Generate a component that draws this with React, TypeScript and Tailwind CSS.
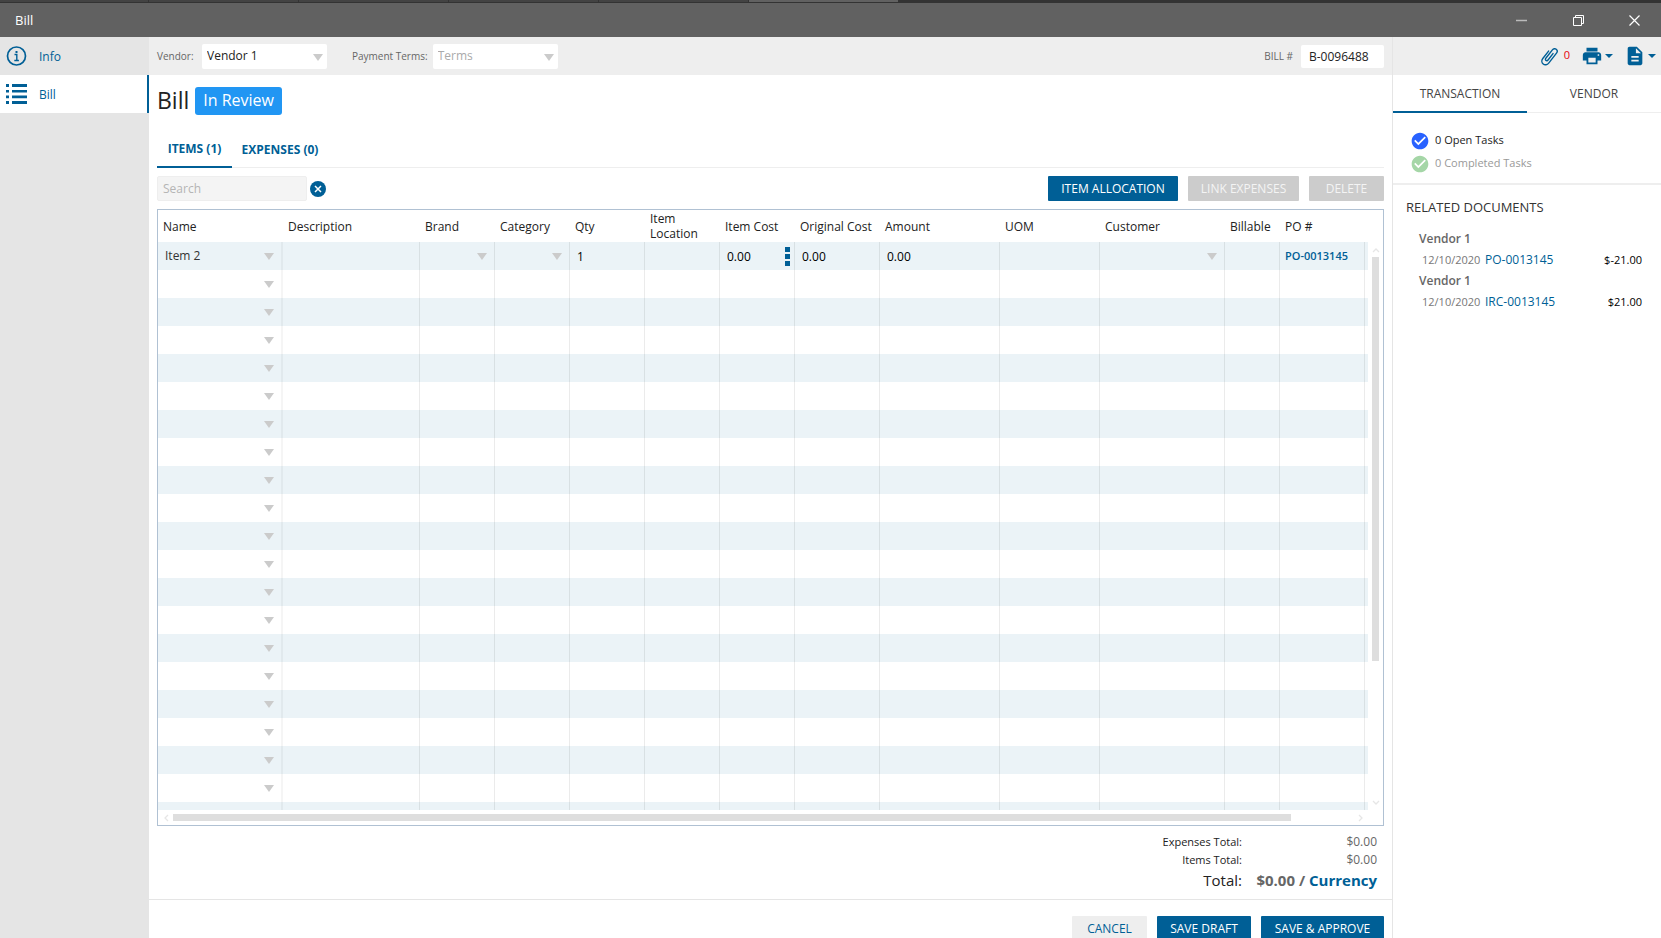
import type { ReactNode } from 'react';
import { MdCheckCircle, MdDescription, MdPrint } from 'react-icons/md';
import clsx from 'clsx';

type Column = {
  key: string;
  label: string;
  width: string;
  kind?: 'select' | 'input' | 'link';
};

const COLUMNS: Column[] = [
  { key: 'name', label: 'Name', width: 'w-[125px]', kind: 'select' },
  { key: 'description', label: 'Description', width: 'w-[137px]' },
  { key: 'brand', label: 'Brand', width: 'w-[75px]', kind: 'select' },
  { key: 'category', label: 'Category', width: 'w-[75px]', kind: 'select' },
  { key: 'qty', label: 'Qty', width: 'w-[75px]', kind: 'input' },
  { key: 'location', label: 'Item Location', width: 'w-[75px]' },
  { key: 'itemCost', label: 'Item Cost', width: 'w-[75px]', kind: 'input' },
  { key: 'originalCost', label: 'Original Cost', width: 'w-[85px]', kind: 'input' },
  { key: 'amount', label: 'Amount', width: 'w-[120px]', kind: 'input' },
  { key: 'uom', label: 'UOM', width: 'w-[100px]' },
  { key: 'customer', label: 'Customer', width: 'w-[125px]', kind: 'select' },
  { key: 'billable', label: 'Billable', width: 'w-[55px]' },
  { key: 'po', label: 'PO #', width: 'w-[85px]', kind: 'link' },
];

const ITEM: Record<string, string> = {
  name: 'Item 2',
  qty: '1',
  itemCost: '0.00',
  originalCost: '0.00',
  amount: '0.00',
  po: 'PO-0013145',
};

const ROW_COUNT = 21;

const DOCUMENTS = [
  { vendor: 'Vendor 1', date: '12/10/2020', number: 'PO-0013145', amount: '$-21.00' },
  { vendor: 'Vendor 1', date: '12/10/2020', number: 'IRC-0013145', amount: '$21.00' },
];

function Triangle({ className }: { className: string }) {
  return (
    <svg viewBox="0 0 10 7" preserveAspectRatio="none" className={className} aria-hidden="true">
      <path d="M0 0h10L5 7z" />
    </svg>
  );
}

function Chevron({ d }: { d: string }) {
  return (
    <svg viewBox="0 0 8 8" className="size-2 shrink-0 fill-none stroke-[#e6e6e6]" aria-hidden="true">
      <path d={d} strokeWidth="1.3" />
    </svg>
  );
}

function InfoIcon() {
  return (
    <svg viewBox="0 0 20 20" className="h-5 w-[21px] fill-none stroke-[#005f96]" aria-hidden="true">
      <circle cx="10" cy="10" r="9" strokeWidth="1.7" />
      <path d="M8 8.5h2.3v6M7.8 14.5h4.6" strokeWidth="1.4" />
      <path d="M9 5h2v2H9z" fill="#005f96" stroke="none" />
    </svg>
  );
}

function ListIcon() {
  return (
    <svg viewBox="0 0 21 20" className="h-5 w-[21px] fill-[#005f96]" aria-hidden="true">
      <path d="M0 0h3v3H0zM6 0h15v3H6zM0 6h3v2.6H0zM6 6h15v2.6H6zM0 11.6h3v2.6H0zM6 11.6h15v2.6H6zM0 17h3v3H0zM6 17h15v3H6z" />
    </svg>
  );
}

function PaperclipIcon() {
  return (
    <svg viewBox="0 0 17 19" className="h-[19px] w-[17px] fill-none stroke-[#005f96]" aria-hidden="true">
      <path
        d="M12 6.6 7 13c-.6.8-1.5.9-2.100.4-.6-.5-.7-1.400-.1-2.100l6.600-8.400c1-1.300 2.700-1.600 3.800-.7 1.100.9 1.300 2.600.3 3.900l-7.800 10c-1.400 1.800-3.900 2.200-5.500.9-1.600-1.300-1.800-3.700-.4-5.500L7.600 4.100"
        strokeWidth="1.4"
        strokeLinecap="round"
      />
    </svg>
  );
}

function TabStrip() {
  return (
    <div className="flex h-[3px] shrink-0 gap-px border-b border-[#333] bg-[#333]">
      <div className="w-[148px] bg-[#434343]" />
      <div className="w-[149px] bg-[#434343]" />
      <div className="w-[149px] bg-[#434343]" />
      <div className="w-[149px] bg-[#434343]" />
      <div className="w-[149px] bg-[#434343]" />
      <div className="w-[149px] bg-[#616161]" />
    </div>
  );
}

function TitleBar() {
  return (
    <header className="flex h-[34px] shrink-0 items-center justify-between bg-[#616161] pl-[15px] text-[13px] text-white">
      <span className="pt-[2px]">Bill</span>
      <div className="flex h-full">
        <button type="button" aria-label="Minimize" className="flex w-[57px] items-center justify-center">
          <svg viewBox="0 0 11 11" className="size-[11px] stroke-[#bbb]"><path d="M0 5.5h11" strokeWidth="1.5" /></svg>
        </button>
        <button type="button" aria-label="Restore" className="flex w-[57px] items-center justify-center">
          <svg viewBox="0 0 11 11" className="size-[11px] fill-none stroke-white"><path d="M.5 2.5h8v8h-8zM2.5 2.5v-2h8v8h-2" /></svg>
        </button>
        <button type="button" aria-label="Close" className="flex w-[54px] items-center justify-center">
          <svg viewBox="0 0 11 11" className="size-[11px] stroke-white"><path d="m.5.5 10 10m0-10-10 10" strokeWidth="1.2" /></svg>
        </button>
      </div>
    </header>
  );
}

function Sidebar() {
  return (
    <nav className="w-[149px] shrink-0 bg-[#e5e5e5] text-[12px] font-medium text-[#005f96]">
      <a href="#info" className="flex h-[38px] items-center gap-3 pl-[6px]">
        <InfoIcon />
        <span className="pt-px">Info</span>
      </a>
      <a href="#bill" className="flex h-[38px] items-center gap-3 border-r-2 border-[#005f96] bg-white pl-[6px]">
        <ListIcon />
        <span className="pt-px">Bill</span>
      </a>
    </nav>
  );
}

function PickList({ id, label, value, muted }: { id: string; label: string; value: string; muted?: boolean }) {
  return (
    <div className="flex items-center gap-[5px]">
      <label htmlFor={id} className="min-w-10 text-[10px] font-medium text-[#666]">{label}</label>
      <div className="relative">
        <select
          id={id}
          className={clsx(
            'block h-[25px] w-[125px] appearance-none rounded-xs bg-white pl-[5px] text-[12px]',
            muted ? 'text-[#aaa]' : 'text-[#222]',
          )}
        >
          <option>{value}</option>
        </select>
        <Triangle className="pointer-events-none absolute top-[10px] right-1 h-[7px] w-[10px] fill-[#cbcbcb]" />
      </div>
    </div>
  );
}

function Toolbar() {
  return (
    <div className="flex h-[38px] shrink-0 items-center gap-[25px] bg-[#eee] px-2">
      <PickList id="vendor" label="Vendor:" value="Vendor 1" />
      <PickList id="terms" label="Payment Terms:" value="Terms" muted />
      <div className="ml-auto flex items-center gap-2">
        <label htmlFor="bill-number" className="text-[10px] font-medium text-[#666]">BILL #</label>
        <input
          id="bill-number"
          defaultValue="B-0096488"
          className="h-[23px] w-[83px] rounded-xs bg-white px-2 text-[12px] text-[#222]"
        />
      </div>
    </div>
  );
}

function ActionButton({ children, tone = 'primary', className }: { children: ReactNode; tone?: 'primary' | 'disabled' | 'plain'; className: string }) {
  return (
    <button
      type="button"
      disabled={tone === 'disabled'}
      className={clsx(
        'h-[25px] rounded-[1px] text-center text-[12px] whitespace-nowrap',
        tone === 'primary' && 'bg-[#005f96] text-white',
        tone === 'disabled' && 'bg-[#ccc] text-[#f4f4f4]',
        tone === 'plain' && 'bg-[#eee] text-[#005f96]',
        className,
      )}
    >
      {children}
    </button>
  );
}

function Cell({ column, value, row }: { column: Column; value: string; row: number }) {
  const label = `${column.label} ${row + 1}`;
  if (column.kind === 'select' && (row === 0 || column.key === 'name')) {
    return (
      <div className="relative">
        <select aria-label={label} className="block h-7 w-full appearance-none pl-[7px] text-[#333]">
          <option>{value}</option>
        </select>
        <Triangle className="pointer-events-none absolute top-[11px] right-[7px] h-[7px] w-[10px] fill-[#cbcbcb]" />
      </div>
    );
  }
  if (column.kind === 'input' && value) {
    return (
      <div className="flex items-center">
        <input aria-label={label} defaultValue={value} className="h-7 w-full min-w-0 pl-[7px] text-black" />
        {column.key === 'itemCost' && (
          <button type="button" aria-label="Cost options" className="flex shrink-0 flex-col gap-[2px] pr-1">
            <span className="size-[5px] bg-[#005f96]" />
            <span className="size-[5px] bg-[#005f96]" />
            <span className="size-[5px] bg-[#005f96]" />
          </button>
        )}
      </div>
    );
  }
  if (column.kind === 'link' && value) {
    return <a href="#po" className="pl-[5px] text-[11px] font-semibold text-[#005f96]">{value}</a>;
  }
  return null;
}

function ItemsTable() {
  return (
    <div className="mx-2 mt-2 flex min-h-0 flex-1 flex-col border border-[#b0c1d3]">
      <div className="flex min-h-0 flex-1">
        <div className="min-w-0 flex-1 overflow-hidden">
          <table className="w-full table-fixed border-separate border-spacing-0 text-[12px]">
            <thead>
              <tr className="h-8 text-left leading-[15px] text-[#222]">
                {COLUMNS.map((column) => (
                  <th key={column.key} scope="col" className={clsx('py-0 pl-[5px] font-normal', column.width)}>
                    {column.label}
                  </th>
                ))}
                <td />
              </tr>
            </thead>
            <tbody>
              {Array.from({ length: ROW_COUNT }, (_, row) => (
                <tr key={row} className="h-7 odd:bg-[#ebf3f7]">
                  {COLUMNS.map((column) => (
                    <td
                      key={column.key}
                      className={clsx('p-0', column.key === 'name' ? 'border-r-2 border-black/4' : 'border-r border-black/8')}
                    >
                      <Cell column={column} row={row} value={row === 0 ? ITEM[column.key] ?? '' : ''} />
                    </td>
                  ))}
                  <td className="p-0" />
                </tr>
              ))}
            </tbody>
          </table>
        </div>
        <div className="flex w-[15px] shrink-0 flex-col items-center gap-[3px] pt-9 pb-[3px]">
          <Chevron d="m1 6 3-3 3 3" />
          <div className="w-full flex-1 px-1">
            <div className="h-[75%] bg-[#dedede]" />
          </div>
          <Chevron d="m1 2 3 3 3-3" />
        </div>
      </div>
      <div className="flex h-[15px] shrink-0 items-center gap-[3px] pr-[18px] pl-1">
        <Chevron d="M6 1 3 4l3 3" />
        <div className="flex-1">
          <div className="h-[7px] w-[94.7%] bg-[#dedede]" />
        </div>
        <Chevron d="m2 1 3 3-3 3" />
      </div>
    </div>
  );
}

function Totals() {
  return (
    <dl className="grid h-[73px] shrink-0 grid-cols-[1fr_135px] content-start pt-[7px] pr-[15px] text-right leading-[18px] text-[#222]">
      <dt className="text-[11px] font-medium">Expenses Total:</dt>
      <dd className="text-[12px] text-[#666]">$0.00</dd>
      <dt className="text-[11px] font-medium">Items Total:</dt>
      <dd className="text-[12px] text-[#666]">$0.00</dd>
      <dt className="text-[15px] leading-[22px]">Total:</dt>
      <dd className="text-[15px] leading-[22px] font-bold whitespace-nowrap text-[#666]">
        $0.00 / <a href="#currency" className="text-[#005f96]">Currency</a>
      </dd>
    </dl>
  );
}

function BillForm() {
  return (
    <main className="flex min-w-0 flex-1 flex-col">
      <Toolbar />
      <div className="flex h-[52px] shrink-0 items-center gap-[6px] px-2">
        <h1 className="pb-[2px] text-[23px] leading-[26px] text-[#222]">Bill</h1>
        <span className="rounded-[3px] bg-[#2196f3] px-2 pb-[2px] text-[16px] leading-[26px] font-medium text-white">In Review</span>
      </div>
      <div className="mx-2 mt-[5px] flex h-9 shrink-0 border-b border-[#eee] text-[12px] font-bold text-[#005f96]">
        <button type="button" className="h-9 w-[75px] border-b-2 border-[#005f96]">ITEMS (1)</button>
        <button type="button" className="h-9 w-24">EXPENSES (0)</button>
      </div>
      <div className="mt-2 flex shrink-0 items-center px-2">
        <input
          type="search"
          aria-label="Search"
          placeholder="Search"
          className="h-[25px] w-[150px] rounded-xs border border-[#eee] bg-[#f4f4f4] px-[5px] text-[12px] placeholder:text-[#b5b5b5]"
        />
        <button type="button" aria-label="Clear search" className="ml-[3px]">
          <svg viewBox="0 0 16 16" className="size-4">
            <circle cx="8" cy="8" r="8" fill="#005f96" />
            <path d="m5 5 6 6m0-6-6 6" stroke="#fff" strokeWidth="1.5" />
          </svg>
        </button>
        <div className="ml-auto flex gap-[10px]">
          <ActionButton className="w-[130px]">ITEM ALLOCATION</ActionButton>
          <ActionButton tone="disabled" className="w-[111px]">LINK EXPENSES</ActionButton>
          <ActionButton tone="disabled" className="w-[75px]">DELETE</ActionButton>
        </div>
      </div>
      <ItemsTable />
      <Totals />
      <footer className="flex h-[39px] shrink-0 justify-end gap-[10px] border-t border-[#e5e5e5] px-2 pt-4">
        <ActionButton tone="plain" className="w-[75px]">CANCEL</ActionButton>
        <ActionButton className="w-[94px]">SAVE DRAFT</ActionButton>
        <ActionButton className="w-[123px]">SAVE &amp; APPROVE</ActionButton>
      </footer>
    </main>
  );
}

function DetailsPanel() {
  return (
    <aside className="w-[269px] shrink-0 border-l border-[#e5e5e5] text-[12px]">
      <div className="flex h-[38px] items-center justify-end bg-[#eee] pr-[5px] text-[#005f96]">
        <button type="button" aria-label="Attachments" className="flex gap-[6px]">
          <PaperclipIcon />
          <span className="text-[11px] leading-4 text-red-600">0</span>
        </button>
        <button type="button" aria-label="Print" className="ml-[11px] flex items-center gap-[2px]">
          <MdPrint className="size-[22px]" />
          <Triangle className="h-1 w-2 fill-[#005f96]" />
        </button>
        <button type="button" aria-label="Document" className="ml-[11px] flex items-center gap-[2px]">
          <MdDescription className="size-[22px]" />
          <Triangle className="h-1 w-2 fill-[#005f96]" />
        </button>
      </div>
      <div className="flex h-[38px] border-b border-[#eee] font-medium text-[#444]">
        <button type="button" className="h-[38px] flex-1 border-b-2 border-[#005f96] pt-[2px]">TRANSACTION</button>
        <button type="button" className="h-[38px] flex-1">VENDOR</button>
      </div>
      <ul className="border-b-2 border-[#eee] pt-[16px] pb-[8px] pl-[17px] text-[11px]">
        <li className="flex h-[23px] items-center gap-[5px] text-[#222]">
          <MdCheckCircle className="size-5 text-[#2962ff]" />
          0 Open Tasks
        </li>
        <li className="flex h-[23px] items-center gap-[5px] text-[#999]">
          <MdCheckCircle className="size-5 text-[#a5d6a7]" />
          0 Completed Tasks
        </li>
      </ul>
      <section className="px-[13px] pt-3">
        <h2 className="text-[13px] leading-5 font-medium text-[#333]">RELATED DOCUMENTS</h2>
        <ul className="pt-[11px] pr-[6px] pl-[13px]">
          {DOCUMENTS.map((document) => (
            <li key={document.number} className="leading-[21px]">
              <div className="font-semibold text-[#666]">{document.vendor}</div>
              <div className="flex">
                <span className="w-[66px] pl-[3px] text-[11px] text-[#777]">{document.date}</span>
                <a href="#document" className="font-medium text-[#005f96]">{document.number}</a>
                <span className="ml-auto text-[11px] text-black">{document.amount}</span>
              </div>
            </li>
          ))}
        </ul>
      </section>
    </aside>
  );
}

export default function App() {
  return (
    <div className="flex h-screen flex-col overflow-hidden bg-white font-['Open_Sans','Noto_Sans',sans-serif]">
      <TabStrip />
      <TitleBar />
      <div className="flex min-h-0 flex-1">
        <Sidebar />
        <BillForm />
        <DetailsPanel />
      </div>
    </div>
  );
}
